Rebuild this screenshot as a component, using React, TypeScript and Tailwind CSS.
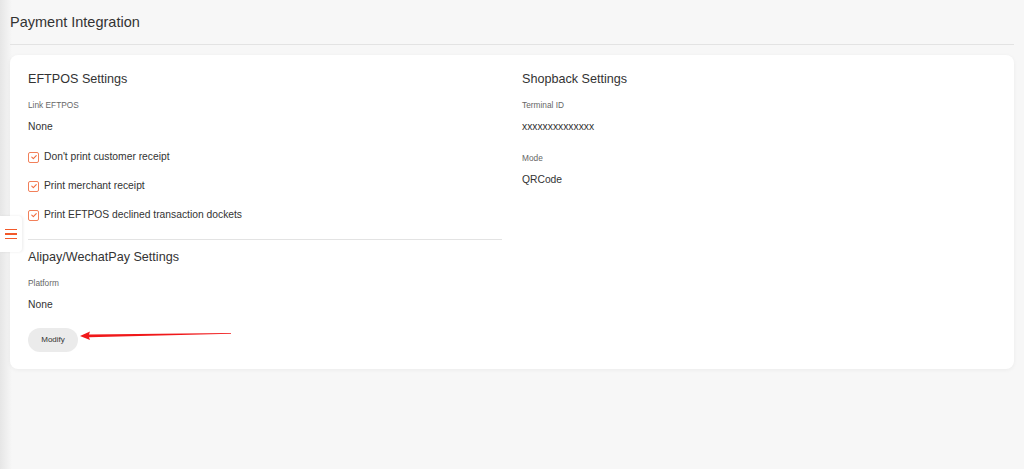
import React from 'react';

const FONT = "font-['Liberation_Sans','Noto_Sans',Arial,sans-serif]";

const Field = ({ label, value, className = '' }: { label: string; value: string; className?: string }) => (
  <div className={className}>
    <div className="text-[8.3px] leading-[12px] text-[#666]">{label}</div>
    <div className="mt-[9px] text-[10.3px] leading-[14px] text-[#333]">{value}</div>
  </div>
);

const Check = ({ label, className = '' }: { label: string; className?: string }) => (
  <label className={`flex items-center h-[14px] ${className}`}>
    <span className="w-[11px] h-[11px] border border-[#f2805a] rounded-[2px] flex items-center justify-center bg-white">
      <svg viewBox="0 0 10 10" className="w-[8px] h-[8px]">
        <path d="M2.2 5.1 L4.2 7 L7.8 3.2" fill="none" stroke="#f06a3c" strokeWidth="1.3" strokeLinecap="round" strokeLinejoin="round" />
      </svg>
    </span>
    <span className="ml-[5px] text-[10.3px] leading-[14px] text-[#333]">{label}</span>
  </label>
);

export default function App() {
  return (
    <div className={`relative w-[1024px] h-[469px] overflow-hidden bg-[#f7f7f7] ${FONT}`}>
      {/* left edge shade */}
      <div className="absolute left-0 top-0 bottom-0 w-[12px] bg-gradient-to-r from-[#e6e6e6] to-transparent pointer-events-none" />

      <div className="relative px-[10px]">
        <div className="h-[45px] flex items-center border-b border-[#e3e3e3]">
          <h1 className="text-[14.5px] leading-[20px] text-[#333]">Payment Integration</h1>
        </div>

        <div className="mt-[10px] bg-white rounded-[8px] shadow-[0_1px_4px_rgba(0,0,0,0.05)] px-[18px] pt-[14px] pb-[17px] grid grid-cols-2 gap-x-[20px]">
          <div>
            <h2 className="text-[12.6px] leading-[20px] text-[#333]">EFTPOS Settings</h2>
            <Field label="Link EFTPOS" value="None" className="mt-[10px]" />
            <Check label="Don't print customer receipt" className="mt-[16px]" />
            <Check label="Print merchant receipt" className="mt-[15px]" />
            <Check label="Print EFTPOS declined transaction dockets" className="mt-[15px]" />
            <div className="mt-[17px] border-t border-[#e3e3e3]" />
            <h2 className="mt-[7px] text-[12.6px] leading-[20px] text-[#333]">Alipay/WechatPay Settings</h2>
            <Field label="Platform" value="None" className="mt-[10px]" />
            <button className="mt-[16px] h-[24px] w-[50px] rounded-full bg-[#ebebeb] text-[8px] text-[#333]">Modify</button>
          </div>
          <div>
            <h2 className="text-[12.6px] leading-[20px] text-[#333]">Shopback Settings</h2>
            <Field label="Terminal ID" value="xxxxxxxxxxxxxx" className="mt-[10px]" />
            <Field label="Mode" value="QRCode" className="mt-[18px]" />
          </div>
        </div>
      </div>

      {/* annotation arrow */}
      <svg className="absolute left-0 top-0 pointer-events-none" width="1024" height="469">
        <path d="M80 336 L90 331.5 L89 334.4 L231 333 L231 333.8 L89 337.2 L90 340 Z" fill="#f0181a" />
      </svg>

      {/* sidebar toggle */}
      <div className="absolute left-0 top-[216px] w-[22px] h-[36px] bg-white rounded-r-[4px] shadow-[1px_0_3px_rgba(0,0,0,0.08)] flex flex-col items-center justify-center gap-[3px]">
        <span className="block w-[12px] h-[1.5px] bg-[#f2592a]" />
        <span className="block w-[12px] h-[1.5px] bg-[#f2592a]" />
        <span className="block w-[12px] h-[1.5px] bg-[#f2592a]" />
      </div>
    </div>
  );
}
